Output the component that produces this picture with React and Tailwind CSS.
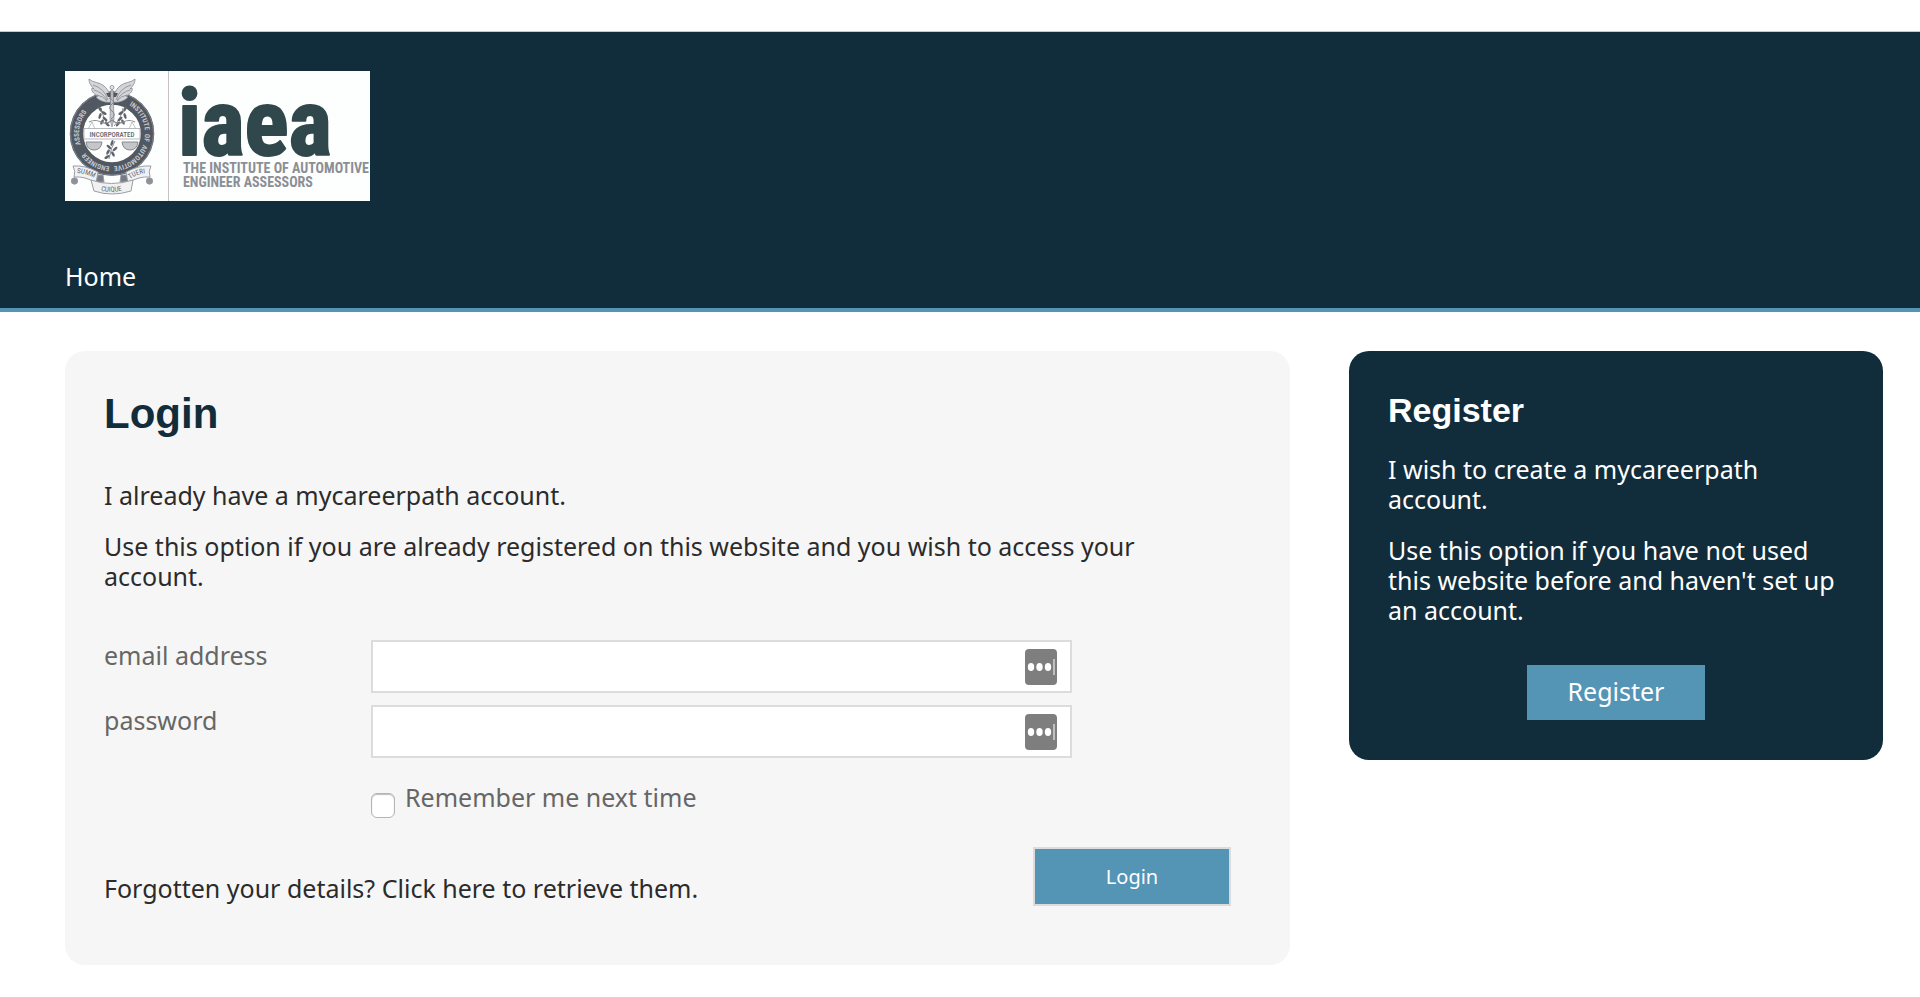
import React, { useState } from 'react'

const leaves = [
  [35, 38, -30], [39, 42, -60], [35, 45, 20], [40, 48, -50], [37, 51, 30], [42, 53, -40],
  [60, 38, 30], [56, 42, 60], [60, 45, -20], [55, 48, 50], [58, 51, -30], [53, 53, 40],
  [47, 72, 20], [44, 76, -50], [50, 78, 50], [43, 81, 30], [48, 83, -30], [42, 86, 60],
]

// words around the ring, with where each one starts along it
const ringWords = [
  ['INSTITUTE', 18],
  ['OF', 52],
  ['AUTOMOTIVE', 63],
  ['ENGINEER', 106],
  ['ASSESSORS', 144],
]

function Crest() {
  return (
    <g>
      <defs>
        <path id="ring" d="M47 29.500 a33 33 0 0 1 0 66 a33 33 0 0 1 0 -66" />
        <path id="scrollLeft" d="M12 102 Q21 102 31 108" />
        <path id="scrollMid" d="M36 120 Q47 122 60 119" />
        <path id="scrollRight" d="M65 108 Q73 102 84 102" />
      </defs>

      <circle cx="47" cy="62.500" r="35.500" fill="#fff" stroke="#525861" strokeWidth="13.500" />
      <circle cx="47" cy="62.500" r="41.500" fill="none" stroke="#7d828a" strokeWidth="1" />
      <g fontSize="7" fontWeight="700" fill="#c6c9cd" fontFamily="Roboto Condensed, Roboto, sans-serif">
        {ringWords.map(([word, offset]) => (
          <text key={word}><textPath href="#ring" startOffset={offset}>{word}</textPath></text>
        ))}
      </g>

      {/* wings and staff */}
      <g fill="#d3d5d8" stroke="#858a91" strokeWidth="0.8">
        <path d="M24 8 C28 12 35 11 39 15 C44 19 45 24 46 31 C41 32 34 30 31 26 L33 25 C28 23 26 19 27 17 L29 18 C25 14 24 11 24 8Z" />
        <path d="M70 8 C66 12 59 11 55 15 C50 19 49 24 48 31 C53 32 60 30 63 26 L61 25 C66 23 68 19 67 17 L65 18 C69 14 70 11 70 8Z" />
        <path d="M28 14 Q39 17 43 29 M29 19 Q37 21 42 29 M32 24 Q38 25 42 30" fill="none" />
        <path d="M66 14 Q55 17 51 29 M65 19 Q57 21 52 29 M62 24 Q56 25 52 30" fill="none" />
      </g>
      <path d="M41 22 H53 L51 26 H43Z" fill="#525861" />
      <circle cx="47" cy="16.500" r="2" fill="#e6e7e9" stroke="#858a91" strokeWidth="0.8" />
      <path d="M46 19 H48 L49 48 L47 56 L45 48Z" fill="#c4c6ca" stroke="#858a91" strokeWidth="0.7" />
      <path d="M44 27 Q51 30 47 33 Q42 37 47 40 Q52 44 46 48" fill="none" stroke="#858a91" strokeWidth="1" />

      {/* laurel sprigs */}
      <path d="M36 37 Q38 48 45 55 M58 37 Q56 48 49 55 M50 70 Q46 76 44 88" fill="none" stroke="#6b7078" strokeWidth="0.8" />
      {leaves.map(([x, y, a]) => (
        <ellipse key={`${x}-${y}`} cx={x} cy={y} rx="1.300" ry="3" fill="#5f656d" transform={`rotate(${a} ${x} ${y})`} />
      ))}

      {/* scales */}
      <path d="M24 51 Q30 48 36 51 Q42 54 47 49 Q52 54 58 51 Q64 48 70 51" fill="none" stroke="#858a91" strokeWidth="1.200" />
      <path d="M27 51 L23 58 M27 51 L30 58 M67 51 L64 58 M67 51 L71 58" stroke="#a3a7ac" strokeWidth="0.7" />
      <path d="M21 71 H37 Q36 79 29 79 Q22 79 21 71Z M57 71 H73 Q72 79 65 79 Q58 79 57 71Z" fill="#c4c6ca" stroke="#858a91" strokeWidth="1" />
      <rect x="19" y="57.500" width="56" height="10.500" fill="#fff" stroke="#a3a7ac" strokeWidth="0.8" />
      <text x="47" y="65.500" textAnchor="middle" fontSize="7" fontWeight="500" fill="#5f656d" fontFamily="Roboto Condensed, Roboto, sans-serif">INCORPORATED</text>

      {/* motto scroll */}
      <g fill="#f1f1f2" stroke="#9a9ea4" strokeWidth="1">
        <path d="M31 104 L38 104 L39 111 L30 111Z M63 104 L56 104 L55 111 L64 111Z" fill="#777c84" />
        <path d="M8 95 Q20 94 33 101 L31 112 Q20 105 9 106 Q11 100 8 95Z" />
        <path d="M86 95 Q74 94 61 101 L63 112 Q74 105 85 106 Q83 100 86 95Z" />
        <path d="M26 109 Q46 116 68 109 L66 120 Q47 126 29 120Z" />
        <circle cx="9.500" cy="110" r="3.200" fill="#8c9097" />
        <circle cx="84.500" cy="110" r="3.200" fill="#8c9097" />
      </g>
      <g fontSize="7" fill="#5f656d" fontFamily="Roboto Condensed, Roboto, sans-serif">
        <text><textPath href="#scrollLeft">SUMM</textPath></text>
        <text><textPath href="#scrollMid">CUIQUE</textPath></text>
        <text><textPath href="#scrollRight">TUERI</textPath></text>
      </g>
    </g>
  )
}

function Logo() {
  return (
    <svg viewBox="0 0 305 130" className="block h-[130px] w-[305px] bg-[#fdfefe]" role="img" aria-label="iaea">
      <Crest />
      <path d="M103.500 0 V130" stroke="#c8c2c3" strokeWidth="1" />
      <g fontFamily="Roboto Condensed, Roboto, sans-serif" fontWeight="700">
        <text x="113" y="84" fontSize="92" fill="#30474c" stroke="#30474c" strokeWidth="2" strokeLinejoin="round">iaea</text>
        <g fontSize="14" fill="#8b8f95">
          <text x="118" y="102">THE INSTITUTE OF AUTOMOTIVE</text>
          <text x="118" y="116">ENGINEER ASSESSORS</text>
        </g>
      </g>
    </svg>
  )
}

function Field({ id, label, type, value, onChange }) {
  return (
    <div className="flex items-start">
      <label htmlFor={id} className="w-[267px] shrink-0 text-[#666]">{label}</label>
      <div className="relative max-w-[701px] flex-1">
        <input
          id={id}
          type={type}
          value={value}
          onChange={(e) => onChange(e.target.value)}
          className="block h-[53px] w-full border-2 border-[#dcdcdc] bg-white pl-3 pr-14 outline-none"
        />
        {/* password manager badge */}
        <svg viewBox="0 0 32 36" className="absolute right-[15px] top-[9px] h-9 w-8" aria-hidden="true">
          <rect width="32" height="36" rx="4" fill="#7e7e7e" />
          <ellipse cx="6" cy="18" rx="3.200" ry="4" fill="#fff" />
          <ellipse cx="14.500" cy="18" rx="3.200" ry="4" fill="#fff" />
          <ellipse cx="23" cy="18" rx="3.200" ry="4" fill="#fff" />
          <path d="M29 10 V26" stroke="#e4e4e4" strokeWidth="1.300" />
        </svg>
      </div>
    </div>
  )
}

function App() {
  const [email, setEmail] = useState('')
  const [password, setPassword] = useState('')
  const [remember, setRemember] = useState(false)

  return (
    <div className="min-h-screen bg-white pt-8 font-['Noto_Sans','Open_Sans',sans-serif] text-[25px] leading-[30px] text-[#2b2b2b]">
      <header className="border-b-4 border-[#5494b5] bg-[#112d3b] pl-[65px] pr-[37px] pt-[39px] shadow-[0_-1px_0_#c4c9cc]">
        <Logo />
        <nav className="pt-[60px] pb-[17px]">
          <a href="#" className="block w-fit text-white">Home</a>
        </nav>
      </header>

      <main className="grid grid-cols-[39fr_17fr] items-start gap-[59px] pl-[65px] pr-[37px] pt-[39px] pb-8">
        <section className="rounded-[20px] bg-[#f6f6f6] pl-[39px] pr-[59px] pt-[39px] pb-[59px]">
          <h1 className="font-['Liberation_Sans',sans-serif] text-[42px] font-bold leading-[48px] text-[#112d3b]">Login</h1>
          <p className="mt-[42px]">I already have a mycareerpath account.</p>
          <p className="mt-[21px]">Use this option if you are already registered on this website and you wish to access your account.</p>

          <form className="mt-[49px]" onSubmit={(e) => e.preventDefault()}>
            <div className="flex flex-col gap-3">
              <Field id="email" label="email address" type="email" value={email} onChange={setEmail} />
              <Field id="password" label="password" type="password" value={password} onChange={setPassword} />
            </div>

            <div className="mt-6 flex items-start gap-[10px] pl-[267px]">
              <input
                id="remember"
                type="checkbox"
                checked={remember}
                onChange={(e) => setRemember(e.target.checked)}
                className="mt-[11px] h-[25px] w-6 appearance-none rounded-md border border-[#b4b4b4] bg-white shadow-[inset_0_1px_1px_#bbb] checked:bg-[#5494b5]"
              />
              <label htmlFor="remember" className="text-[#666]">Remember me next time</label>
            </div>

            <div className="mt-[29px] flex items-end justify-between">
              <a href="#" className="pb-[3px]">Forgotten your details? Click here to retrieve them.</a>
              <button type="submit" className="h-[59px] w-[198px] border-2 border-[#dcdcdc] bg-[#5494b5] text-[20px] text-white">
                Login
              </button>
            </div>
          </form>
        </section>

        <aside className="rounded-[20px] bg-[#112d3b] px-[39px] pt-[39px] pb-10 text-white">
          <h2 className="font-['Liberation_Sans',sans-serif] text-[34px] font-bold leading-[40px]">Register</h2>
          <p className="mt-6">I wish to create a mycareerpath account.</p>
          <p className="mt-[21px]">Use this option if you have not used this website before and haven't set up an account.</p>
          <button type="button" className="mx-auto mt-10 block h-[55px] w-[178px] bg-[#5494b5] pb-1">Register</button>
        </aside>
      </main>
    </div>
  )
}

export default App
